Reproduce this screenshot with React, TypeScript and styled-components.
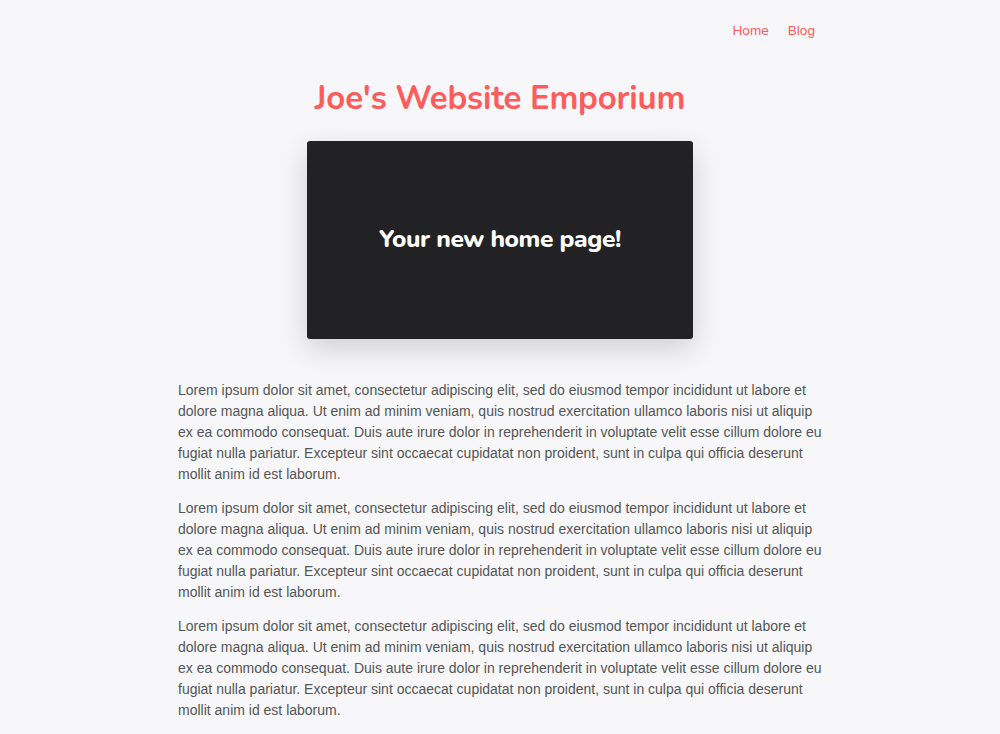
import React from 'react'
import styled, { createGlobalStyle } from 'styled-components'

const accent = '#fd5c5c'

const GlobalStyle = createGlobalStyle`
  html, body {
    margin: 0;
    padding: 0;
    background: #f7f7f9;
  }
  body {
    font-family: "Liberation Sans", Arial, sans-serif;
  }
`

const Page = styled.div`
  min-height: 734px;
  background: #f7f7f9;
`

const Container = styled.div`
  width: 644px;
  margin: 0 auto;
  padding-top: 20px;
`

const Nav = styled.nav`
  display: flex;
  justify-content: flex-end;
  gap: 19px;
  padding-right: 7px;
`

const NavLink = styled.a`
  color: ${accent};
  font-size: 13.6px;
  text-decoration: none;
  line-height: 21px;
`

const Title = styled.h1`
  margin: 37px 0 0;
  text-align: center;
  color: ${accent};
  font-family: "Nunito", "Open Sans", sans-serif;
  font-weight: 700;
  font-size: 33px;
  line-height: 42px;
  letter-spacing: -0.2px;
`

const Hero = styled.div`
  width: 386px;
  height: 198px;
  margin: 21px auto 0;
  background: #222224;
  border-radius: 3px;
  box-shadow: 0 10px 30px rgba(0, 0, 0, 0.16);
  display: flex;
  align-items: center;
  justify-content: center;
`

const HeroText = styled.h2`
  margin: 0 0 2px;
  color: #fff;
  font-family: "Nunito", "Open Sans", sans-serif;
  font-weight: 800;
  font-size: 24.5px;
  letter-spacing: -0.4px;
`

const Content = styled.div`
  margin-top: 41px;
`

const Paragraph = styled.p`
  margin: 0 0 13px;
  color: #555;
  font-size: 14px;
  line-height: 21px;
`

const lorem =
  'Lorem ipsum dolor sit amet, consectetur adipiscing elit, sed do eiusmod tempor incididunt ut labore et dolore magna aliqua. Ut enim ad minim veniam, quis nostrud exercitation ullamco laboris nisi ut aliquip ex ea commodo consequat. Duis aute irure dolor in reprehenderit in voluptate velit esse cillum dolore eu fugiat nulla pariatur. Excepteur sint occaecat cupidatat non proident, sunt in culpa qui officia deserunt mollit anim id est laborum.'

const App: React.FC = () => {
  return (
    <Page>
      <GlobalStyle />
      <Container>
        <Nav>
          <NavLink href="#">Home</NavLink>
          <NavLink href="#">Blog</NavLink>
        </Nav>
        <Title>Joe's Website Emporium</Title>
        <Hero>
          <HeroText>Your new home page!</HeroText>
        </Hero>
        <Content>
          {[0, 1, 2].map(i => (
            <Paragraph key={i}>{lorem}</Paragraph>
          ))}
        </Content>
      </Container>
    </Page>
  )
}

export default App
